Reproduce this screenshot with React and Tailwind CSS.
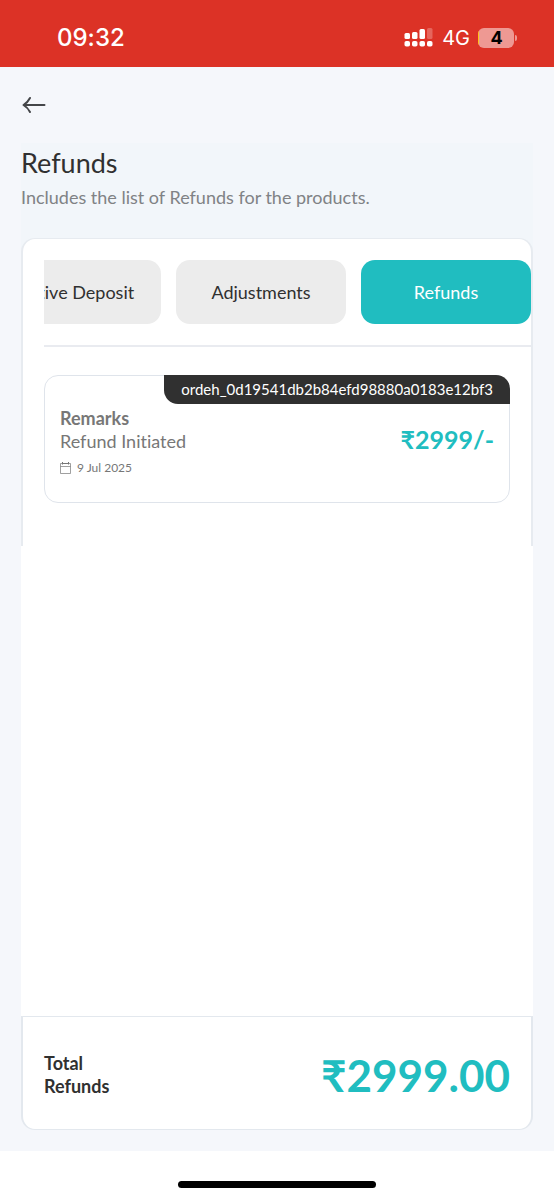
import React from "react";

const tabs = [
  { id: "active-deposit", label: "Active Deposit" },
  { id: "adjustments", label: "Adjustments" },
  { id: "refunds", label: "Refunds" },
];

const refunds = [
  {
    id: "ordeh_0d19541db2b84efd98880a0183e12bf3",
    remarks: "Refund Initiated",
    date: "9 Jul 2025",
    amount: "₹2999/-",
  },
];

function StatusBar() {
  return (
    <div className="flex h-[67px] items-center justify-between bg-[#dc3226] pt-2 pr-[37px] pl-[57px] font-['Inter',sans-serif] text-white">
      <span className="text-2xl font-medium">09:32</span>
      <div className="flex items-center gap-2">
        {/* Dual sim signal */}
        <svg width="30" height="20" viewBox="0 0 30 20" fill="currentColor">
          <rect x="0.5" y="5" width="5.500" height="6" rx="1.5" />
          <rect x="8" y="4" width="5.500" height="7" rx="1.5" />
          <rect x="15.500" y="1" width="5.500" height="10" rx="1.5" />
          <rect x="23" y="0" width="5.500" height="11" rx="1.5" opacity="0.25" />
          <rect x="0.5" y="13" width="5.500" height="5.500" rx="1.8" />
          <rect x="8" y="13" width="5.500" height="5.500" rx="1.8" />
          <rect x="15.500" y="13" width="5.500" height="5.500" rx="1.8" />
          <rect x="23" y="13" width="5.500" height="5.500" rx="1.8" />
        </svg>
        <span className="text-xl">4G</span>
        {/* Battery */}
        <div className="flex items-center gap-px">
          <span className="flex h-5 w-9 overflow-hidden rounded-md bg-[#ee9993] text-lg font-bold text-black">
            <span className="w-px bg-[#fcc419]" />
            <span className="flex-1 text-center leading-5">4</span>
          </span>
          <span className="h-[6px] w-[2px] rounded-r-full bg-[#ee9993]" />
        </div>
      </div>
    </div>
  );
}

function Tabs({ active }) {
  return (
    <div className="ml-[21px] border-b-2 border-[#e9ebf0] pb-[21px]">
      <div className="flex justify-end gap-[15px] overflow-hidden">
        {tabs.map((tab) => (
          <button
            key={tab.id}
            type="button"
            className={
              tab.id === active
                ? "h-16 w-[170px] shrink-0 rounded-[14px] bg-[#20bdc0] text-lg text-white"
                : "h-16 w-[170px] shrink-0 rounded-[14px] bg-[#ececec] text-lg text-[#303030]"
            }
          >
            {tab.label}
          </button>
        ))}
      </div>
    </div>
  );
}

function RefundCard({ refund }) {
  return (
    <div className="h-32 rounded-[14px] border border-[#dfe4eb] bg-white">
      <div className="-mx-px -mt-px flex justify-end">
        <span className="rounded-tr-[14px] rounded-bl-[14px] bg-[#303030] px-[17px] text-[15px] leading-[29px] text-white">
          {refund.id}
        </span>
      </div>
      <div className="flex items-start justify-between px-[15px] pt-[3px] text-[#777777]">
        <div>
          <p className="text-lg leading-[23px] font-bold">Remarks</p>
          <p className="text-lg leading-[23px]">{refund.remarks}</p>
          <p className="mt-[3px] flex items-center gap-[6px] text-xs leading-6">
            <svg width="11" height="12" viewBox="0 0 11 12" fill="none" stroke="currentColor">
              <path d="M.5 1.500h10v10H.5zM.5 4.500h10" strokeWidth="0.7" />
              <path d="M2.500 0v2.500M8.500 0v2.500M2 1.500h7" strokeWidth="1" />
            </svg>
            {refund.date}
          </p>
        </div>
        <p className="pt-4 text-[25px] leading-8 font-bold text-[#20bdc0]">
          {refund.amount}
        </p>
      </div>
    </div>
  );
}

function App() {
  return (
    <div className="flex min-h-screen flex-col bg-[#f5f7fb] font-['Lato',sans-serif] text-[#303030] [font-variant-ligatures:none]">
      <StatusBar />

      <main className="flex flex-1 flex-col px-[21px] pb-[21px]">
        <div className="flex h-[76px] items-center">
          <button type="button" aria-label="Back">
            <svg width="26" height="20" viewBox="0 0 26 20" fill="none" stroke="#444649" strokeWidth="2" strokeLinecap="round" strokeLinejoin="round">
              <path d="M23.500 10H3M9 3C7.500 6 5 8.500 2.500 10C5 11.500 7.500 14 9 17" />
            </svg>
          </button>
        </div>

        <div className="bg-[#f2f6fa]">
          <header className="pt-1 pb-[27px]">
            <h1 className="text-[27px] leading-8">Refunds</h1>
            <p className="mt-1 text-lg leading-7 text-[#808285]">
              Includes the list of Refunds for the products.
            </p>
          </header>

          <section className="rounded-t-[14px] border-x-2 border-t border-[#e7ebf0] bg-white pt-[21px]">
            <Tabs active="refunds" />
            <div className="px-[21px] pt-7 pb-[43px]">
              {refunds.map((refund) => (
                <RefundCard key={refund.id} refund={refund} />
              ))}
            </div>
          </section>
        </div>

        <div className="flex-1 bg-white" />

        {/* Total */}
        <footer className="flex items-center justify-between rounded-b-[14px] border-x-2 border-y border-[#e3e8ee] bg-white px-[21px] pt-[28px] pb-[24px]">
          <p className="w-20 text-lg leading-[23px] font-bold">Total Refunds</p>
          <p className="text-[44px] leading-[60px] font-bold text-[#20bdc0]">₹2999.00</p>
        </footer>
      </main>

      {/* Home indicator */}
      <div className="flex h-[49px] justify-center bg-white pt-[30px]">
        <span className="h-[7px] w-[198px] rounded-full bg-black" />
      </div>
    </div>
  );
}

export default App;
